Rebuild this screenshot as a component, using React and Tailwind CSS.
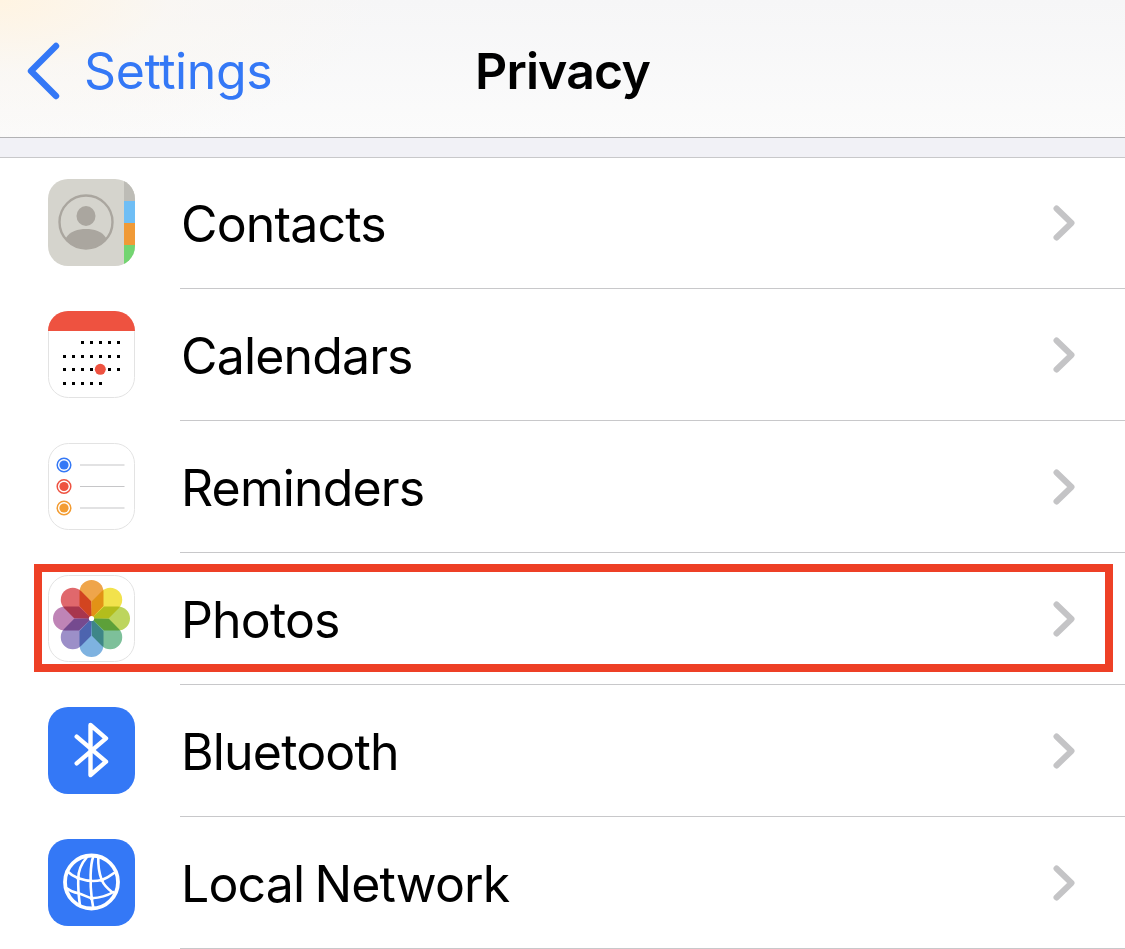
import React from "react";

const Chevron = () => (
  <svg width="22" height="36" viewBox="0 0 22 36" className="block">
    <path d="M3.5 3.5 L18.5 18 L3.5 32.5" fill="none" stroke="#c4c4c6" strokeWidth="6" strokeLinecap="round" strokeLinejoin="round" />
  </svg>
);

const ContactsIcon = () => (
  <svg width="87" height="87" viewBox="0 0 87 87" className="block">
    <defs><clipPath id="c1"><rect width="87" height="87" rx="20" /></clipPath></defs>
    <g clipPath="url(#c1)">
      <rect width="87" height="87" fill="#d5d4cd" />
      <rect x="76" y="0" width="11" height="22" fill="#bdbcb6" />
      <rect x="76" y="22" width="11" height="22" fill="#6fbef5" />
      <rect x="76" y="44" width="11" height="22" fill="#f09a37" />
      <rect x="76" y="66" width="11" height="21" fill="#73d571" />
      <circle cx="38" cy="43" r="26.5" fill="none" stroke="#aaa69f" strokeWidth="2.4" />
      <ellipse cx="38" cy="37" rx="9.5" ry="10" fill="#aaa69f" />
      <path d="M17.5 59.5 C22 52 30 50 38 50 C46 50 54 52 58.5 59.5 C53 66 46 69 38 69 C30 69 23 66 17.5 59.5 Z" fill="#aaa69f" />
    </g>
  </svg>
);

const CalendarIcon = () => {
  const xs = [16.3, 25.3, 34.3, 43.3, 52.3, 61.3, 70.3];
  const dots = [
    ...xs.slice(2).map((x) => [x, 31.3]),
    ...xs.map((x) => [x, 45.7]),
    ...xs.filter((x) => x !== 52.3).map((x) => [x, 58.3]),
    ...xs.slice(0, 5).map((x) => [x, 72.3]),
  ];
  return (
    <svg width="87" height="87" viewBox="0 0 87 87" className="block">
      <defs><clipPath id="c2"><rect width="87" height="87" rx="20" /></clipPath></defs>
      <rect x="0.5" y="0.5" width="86" height="86" rx="20" fill="#fff" stroke="#e3e3e3" />
      <g clipPath="url(#c2)"><rect width="87" height="20" fill="#ee5240" /></g>
      {dots.map(([x, y]) => (
        <rect key={x + "-" + y} x={Math.round(x - 1.5)} y={Math.round(y - 1.5)} width="3" height="3" fill="#000" />
      ))}
      <circle cx="52.3" cy="58.3" r="5.5" fill="#ee5240" />
    </svg>
  );
};

const RemindersIcon = () => (
  <svg width="87" height="87" viewBox="0 0 87 87" className="block">
    <rect x="0.5" y="0.5" width="86" height="86" rx="20" fill="#fff" stroke="#e3e3e3" />
    {[["#3478f6", 22], ["#ee5240", 43.5], ["#f39c31", 65]].map(([c, y]) => (
      <g key={y}>
        <circle cx="16" cy={y} r="6.8" fill="none" stroke={c} strokeWidth="1.5" />
        <circle cx="16" cy={y} r="4.6" fill={c} />
        <line x1="32" y1={y} x2="76.5" y2={y} stroke="#c6c6c8" strokeWidth="1.2" />
      </g>
    ))}
  </svg>
);

const PhotosIcon = () => {
  const petals = ["#efa54a", "#f2e24c", "#bdd55e", "#7dc09a", "#7eb2e0", "#9c8fc8", "#bf84b6", "#e0686c"];
  return (
    <svg width="87" height="87" viewBox="0 0 87 87" className="block">
      <rect x="0.5" y="0.5" width="86" height="86" rx="20" fill="#fff" stroke="#e3e3e3" />
      <g style={{ isolation: "isolate" }}>
        {petals.map((c, i) => (
          <path
            key={c}
            transform={`rotate(${i * 45} 43.5 43.5)`}
            d="M43.5 43.5 L31.5 31 V17 A12 12 0 0 1 55.5 17 V31 Z"
            fill={c}
            style={{ mixBlendMode: "multiply" }}
          />
        ))}
      </g>
      <circle cx="43.5" cy="43.5" r="2.6" fill="#fff" />
    </svg>
  );
};

const BluetoothIcon = () => (
  <svg width="87" height="87" viewBox="0 0 87 87" className="block">
    <rect width="87" height="87" rx="20" fill="#3478f6" />
    <path d="M28.7 29.7 L58 54.7 L42.5 68 V18 L58 31.3 L28.7 56.3" fill="none" stroke="#fff" strokeWidth="4.4" strokeLinecap="round" strokeLinejoin="round" />
  </svg>
);

const NetworkIcon = () => (
  <svg width="87" height="87" viewBox="0 0 87 87" className="block">
    <rect width="87" height="87" rx="20" fill="#3478f6" />
    <g fill="none" stroke="#fff" strokeLinecap="round" strokeLinejoin="round">
      <circle cx="43.5" cy="43" r="26.5" strokeWidth="3.8" />
      <g strokeWidth="2.6">
        <path d="M19 32 C23 36 27 38 30.3 39.3 C38 42 47 42.5 53.7 41 C58 39.5 62 37 66 34" />
        <path d="M18.7 49.3 C22 52 26 53.5 30.3 54.3 C35 55.5 39 58 43.7 59.3 C50 59 58 57.5 65.3 53" />
        <path d="M39 18 C33 25 30.3 32 30.3 39.3 C30 46 30.5 56 32 67" />
        <path d="M45.3 17.5 C42 26 42 45 43.7 59.3 L45.3 69" />
        <path d="M50.3 18 C50 26 51 34 53.7 41 C56 46 60 50 64 53" />
      </g>
      <circle cx="30.3" cy="39.3" r="1.2" fill="#fff" strokeWidth="1.6" />
      <circle cx="53.7" cy="41" r="1.2" fill="#fff" strokeWidth="1.6" />
      <circle cx="43.7" cy="59.3" r="1.2" fill="#fff" strokeWidth="1.6" />
    </g>
  </svg>
);

const rows = [
  ["Contacts", ContactsIcon],
  ["Calendars", CalendarIcon],
  ["Reminders", RemindersIcon],
  ["Photos", PhotosIcon],
  ["Bluetooth", BluetoothIcon],
  ["Local Network", NetworkIcon],
];

export default function App() {
  return (
    <div className="relative h-[949px] w-[1125px] overflow-hidden bg-white font-['Inter','Liberation_Sans',sans-serif] text-black">
      <header className="relative flex h-[138px] items-center justify-center border-b border-[#b2b2b4] bg-[radial-gradient(ellipse_380px_160px_at_0%_0%,#fff4e2_0%,rgba(251,247,241,0.6)_45%,rgba(248,248,248,0)_100%),linear-gradient(to_bottom,#f6f6f7,#fbfbfb)]">
        <div className="absolute left-[27px] top-[42px] flex items-center gap-[24px] text-[#3478f6]">
          <svg width="33" height="58" viewBox="0 0 33 58" className="block">
            <path d="M29 4 L4 29 L29 54" fill="none" stroke="#3478f6" strokeWidth="6.4" strokeLinecap="round" strokeLinejoin="round" />
          </svg>
          <span className="text-[50px] leading-[58px] tracking-[-0.4px]">Settings</span>
        </div>
        <h1 className="mt-[4px] text-[50px] font-semibold leading-[58px] tracking-[-0.85px]">Privacy</h1>
      </header>
      <div className="h-[20px] border-b border-[#c8c8ca] bg-[#f1f1f6]" />
      <ul className="-mt-px">
        {rows.map(([label, Icon]) => (
          <li key={label} className="flex h-[132px] items-center pl-[48px]">
            <div className="mr-[45px] shrink-0 -translate-y-[1px]">
              <Icon />
            </div>
            <div className="flex h-full flex-1 items-center justify-between border-b border-[#c8c8ca] pr-[50px]">
              <span className="mt-[2px] ml-[1px] text-[50px] leading-[58px] tracking-[-0.85px] [word-spacing:-3px]">{label}</span>
              <Chevron />
            </div>
          </li>
        ))}
      </ul>
      <div className="absolute left-[34px] top-[564px] h-[108px] w-[1079px] border-[8px] border-[#ee4026]" />
    </div>
  );
}
